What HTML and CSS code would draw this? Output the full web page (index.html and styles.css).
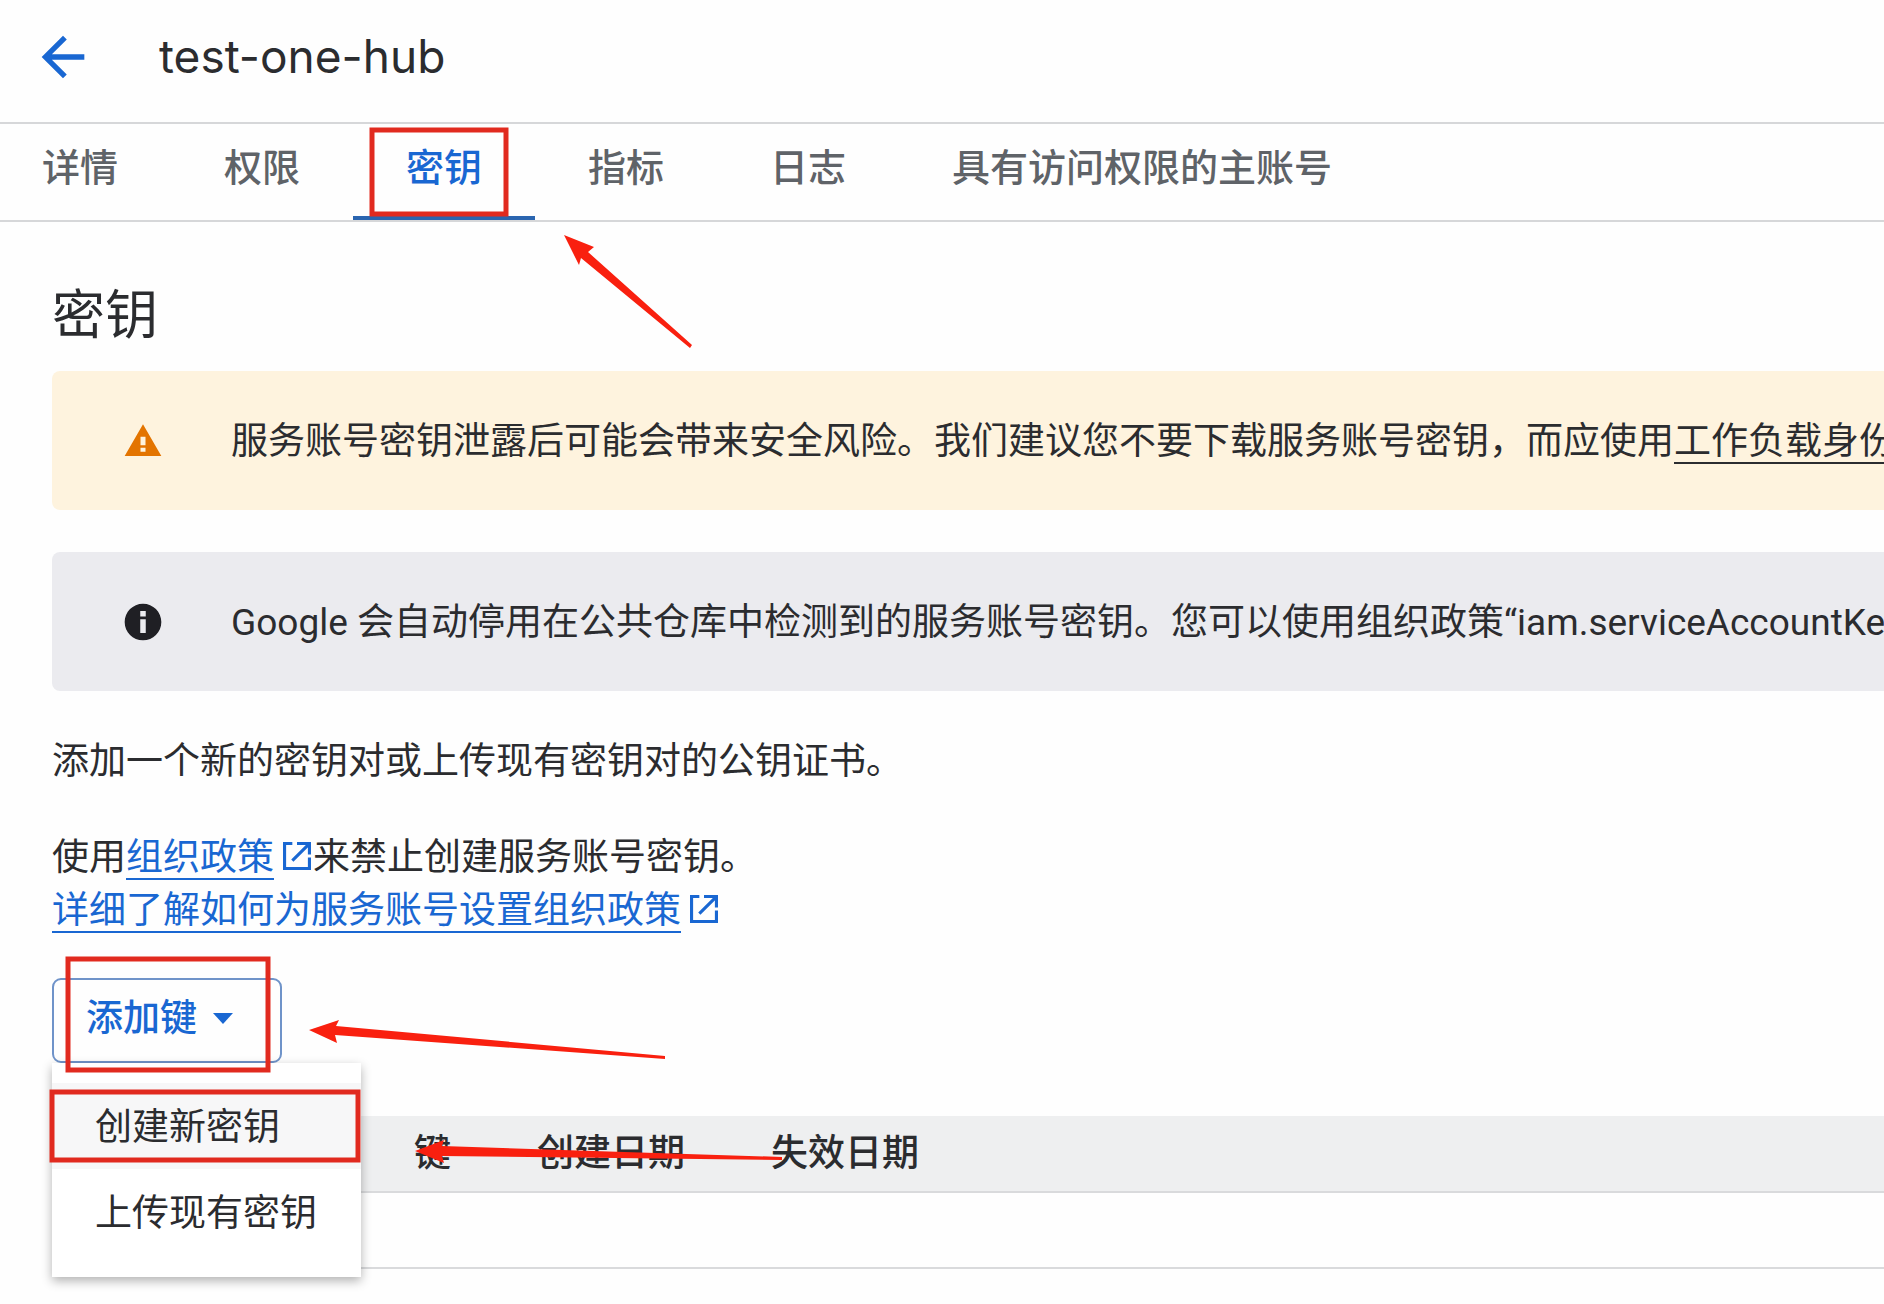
FILE: index.html
```
<!DOCTYPE html>
<html lang="zh-CN">
<head>
    <meta charset="UTF-8">
    <meta name="viewport" content="width=device-width, initial-scale=1.0">
    <title>test-one-hub</title>
    <link rel="stylesheet" href="styles.css">
</head>
<body>
    <header class="topbar">
        <a class="back" href="#" aria-label="返回">
            <svg viewBox="0 0 24 24"><path d="M20 11H7.83l5.59-5.59L12 4l-8 8 8 8 1.41-1.41L7.83 13H20v-2z"/></svg>
        </a>
        <h1>test-one-hub</h1>
    </header>

    <nav class="tabs">
        <a href="#">详情</a>
        <a href="#">权限</a>
        <a href="#" class="active">密钥</a>
        <a href="#">指标</a>
        <a href="#">日志</a>
        <a href="#">具有访问权限的主账号</a>
    </nav>

    <main>
        <h2>密钥</h2>

        <div class="banner warning">
            <svg viewBox="0 0 24 24"><path d="M1 21h22L12 2 1 21zm12.5-2.5h-3V16h3v2.5zm0-4h-3v-5h3v5z"/></svg>
            <p>服务账号密钥泄露后可能会带来安全风险。我们建议您不要下载服务账号密钥，而应使用<a href="#">工作负载身份</a></p>
        </div>

        <div class="banner info">
            <svg viewBox="0 0 24 24"><path d="M12 2C6.48 2 2 6.48 2 12s4.48 10 10 10 10-4.48 10-10S17.52 2 12 2zm1.5 16h-3v-7.5h3V18zm0-9h-3V6h3v3z"/></svg>
            <p>Google 会自动停用在公共仓库中检测到的服务账号密钥。您可以使用组织政策“iam.serviceAccountKe</p>
        </div>

        <p class="text">添加一个新的密钥对或上传现有密钥对的公钥证书。</p>
        <p class="text">
            使用<a href="#">组织政策</a><svg class="external" viewBox="0 0 18 18"><path d="M6 1H1v16h16v-7M9 1h8v7M17 1L6 12"/></svg>来禁止创建服务账号密钥。<br>
            <a href="#">详细了解如何为服务账号设置组织政策</a><svg class="external" viewBox="0 0 18 18"><path d="M6 1H1v16h16v-7M9 1h8v7M17 1L6 12"/></svg>
        </p>

        <div class="dropdown">
            <button class="add-key">添加键<span class="caret"></span></button>
            <div class="menu">
                <button class="selected">创建新密钥</button>
                <button>上传现有密钥</button>
            </div>
        </div>

        <table>
            <colgroup>
                <col class="col-status">
                <col class="col-key">
                <col class="col-date">
                <col>
            </colgroup>
            <thead>
                <tr>
                    <th></th>
                    <th>键</th>
                    <th>创建日期</th>
                    <th>失效日期</th>
                </tr>
            </thead>
            <tbody>
                <tr><td colspan="4"></td></tr>
            </tbody>
        </table>
    </main>

    <!-- red marks over the page -->
    <svg class="marks" width="800" height="1200">
        <rect x="372" y="130" width="134" height="84"/>
        <rect x="68" y="959" width="200" height="111"/>
        <rect x="52" y="1092" width="306" height="68"/>
        <path d="M564 235L594 247L588 252L692 345L690 348L581 258L579 265Z"/>
        <path d="M309 1030L339 1020L336 1026L665 1056L665 1059L335 1035L337 1043Z"/>
        <path d="M415 1151L444 1140L442 1146L782 1157L782 1160L442 1156L444 1163Z"/>
    </svg>
</body>
</html>
```
FILE: styles.css
```
* {
    box-sizing: border-box;
}
body {
    margin: 0;
    min-height: 100vh;
    font-family: Roboto, "Noto Sans CJK SC", sans-serif;
    font-size: 37px;
    line-height: 53px;
    color: #2b2c2f;
    background-color: #fefefe;
}
h1, h2, p {
    margin: 0;
    font-weight: 400;
}
a {
    color: #1967d2;
}
button {
    font: inherit;
    color: inherit;
    cursor: pointer;
}
.topbar {
    display: flex;
    align-items: center;
    gap: 64px;
    height: 124px;
    padding: 0 31px 9px;
    border-bottom: 2px solid #d6d7d9;
}
.back {
    display: flex;
}
.back svg {
    width: 64px;
    height: 64px;
    fill: #1967d2;
}
h1 {
    font-family: Inter, sans-serif;
    font-size: 46px;
}
.tabs {
    display: flex;
    height: 98px;
    margin-left: -11px;
    border-bottom: 2px solid #d6d7d9;
}
.tabs a {
    padding: 18px 53px 0;
    font-size: 38px;
    font-weight: 500;
    color: #5f6368;
    text-decoration: none;
    white-space: nowrap;
    border-bottom: 4px solid transparent;
}
.tabs .active {
    color: #1967d2;
    border-bottom-color: #2a65b0;
}
main {
    padding: 68px 0 0 52px;
}
h2 {
    margin-bottom: 28px;
    font-size: 53px;
}
.banner {
    display: flex;
    align-items: center;
    gap: 66px;
    height: 139px;
    margin-bottom: 42px;
    padding-left: 69px;
    border-radius: 8px 0 0 8px;
    white-space: nowrap;
    overflow: hidden;
}
.banner svg {
    flex: none;
    width: 44px;
    height: 44px;
}
.banner p {
    padding-top: 2px;
}
.warning {
    background-color: #fef3de;
}
.warning svg {
    padding: 2px;
    fill: #e37400;
}
.info {
    background-color: #ebebef;
}
.info svg {
    fill: #1f1f24;
}
.banner a {
    color: inherit;
}
.banner a, .text a {
    text-decoration-thickness: 2px;
    text-underline-offset: 8px;
}
.text {
    margin-bottom: 41px;
    padding-top: 2px;
}
.external {
    width: 28px;
    height: 28px;
    margin: 0 2px 0 9px;
    fill: none;
    stroke: #1967d2;
    stroke-width: 2;
}
.dropdown {
    position: relative;
    width: 230px;
}
.add-key {
    display: flex;
    align-items: center;
    gap: 16px;
    width: 100%;
    height: 85px;
    padding: 0 32px 4px;
    font-weight: 500;
    color: #1967d2;
    white-space: nowrap;
    background: none;
    border: 2px solid #6f93c9;
    border-radius: 9px;
}
.caret {
    border: 10px solid transparent;
    border-top: 11px solid #1967d2;
    border-bottom: 0;
}
.menu {
    position: absolute;
    top: 85px;
    left: 0;
    width: 309px;
    padding: 20px 0 22px;
    background-color: #fff;
    box-shadow: 0 4px 10px rgba(0, 0, 0, 0.3);
}
.menu button {
    display: block;
    width: 100%;
    height: 86px;
    padding: 2px 43px 0;
    text-align: left;
    background: none;
    border: 0;
}
.menu .selected {
    background-color: #f7f7f8;
}
table {
    width: 100%;
    margin-top: 53px;
    table-layout: fixed;
    border-collapse: collapse;
}
.col-status {
    width: 362px;
}
.col-key {
    width: 123px;
}
.col-date {
    width: 234px;
}
th {
    height: 76px;
    padding: 0;
    font-weight: 500;
    text-align: left;
    white-space: nowrap;
    background-color: #eeeff0;
    border-bottom: 2px solid #d9dadc;
}
td {
    height: 76px;
    border-bottom: 2px solid #d9dadc;
}
.marks {
    position: absolute;
    top: 0;
    left: 0;
    pointer-events: none;
    fill: #f9200f;
}
.marks rect {
    fill: none;
    stroke: #e12a1f;
    stroke-width: 5;
}
```
